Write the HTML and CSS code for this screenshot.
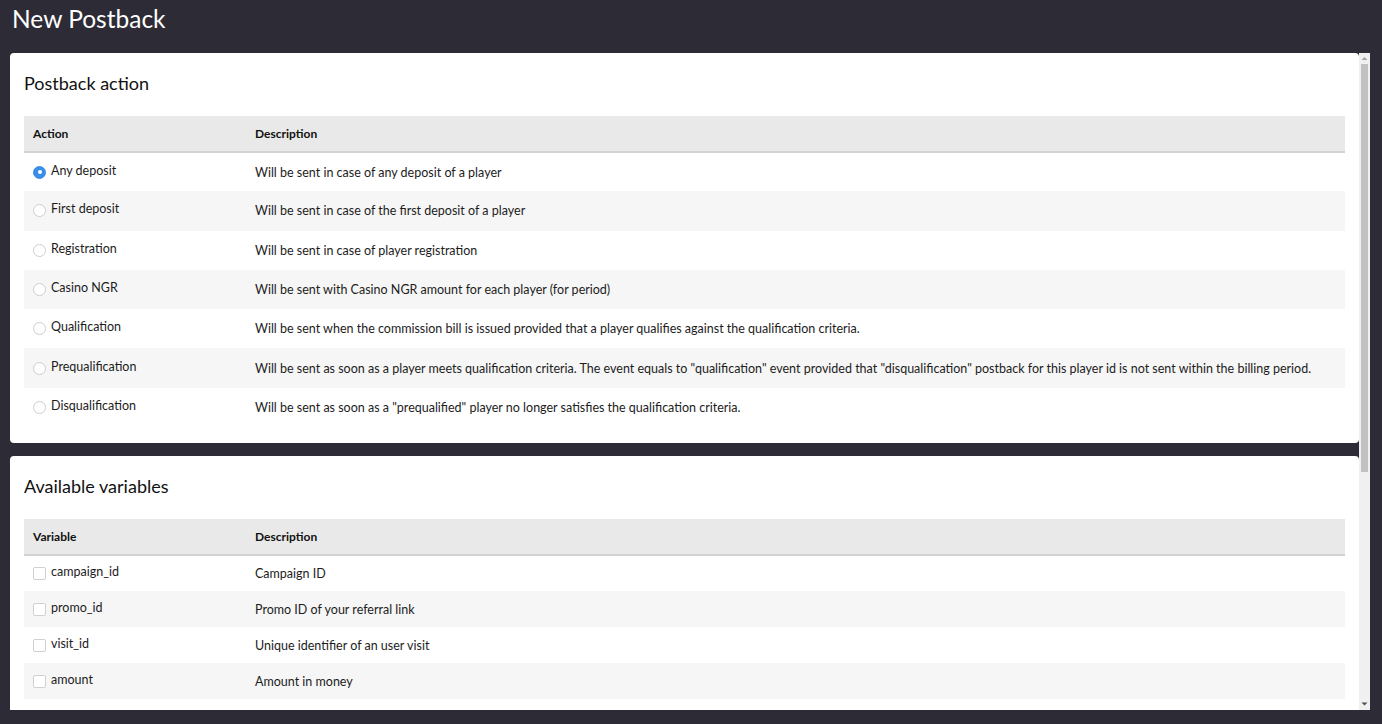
FILE: index.html
```html
<!DOCTYPE html>
<html>
<head>
<meta charset="utf-8">
<link rel="stylesheet" href="styles.css">
</head>
<body>
<header class="page-head"><h1 class="page-title">New Postback</h1></header>
<div class="viewport">
  <main class="content">
    <section class="card">
      <h2 class="card-title">Postback action</h2>
      <table class="grid actions">
        <colgroup><col class="col-a"><col></colgroup>
        <thead><tr><th>Action</th><th>Description</th></tr></thead>
        <tbody>
          <tr><td><label class="opt"><span class="radio on"></span>Any deposit</label></td><td>Will be sent in case of any deposit of a player</td></tr>
          <tr><td><label class="opt"><span class="radio"></span>First deposit</label></td><td>Will be sent in case of the first deposit of a player</td></tr>
          <tr><td><label class="opt"><span class="radio"></span>Registration</label></td><td>Will be sent in case of player registration</td></tr>
          <tr><td><label class="opt"><span class="radio"></span>Casino NGR</label></td><td>Will be sent with Casino NGR amount for each player (for period)</td></tr>
          <tr><td><label class="opt"><span class="radio"></span>Qualification</label></td><td>Will be sent when the commission bill is issued provided that a player qualifies against the qualification criteria.</td></tr>
          <tr><td><label class="opt"><span class="radio"></span>Prequalification</label></td><td>Will be sent as soon as a player meets qualification criteria. The event equals to "qualification" event provided that "disqualification" postback for this player id is not sent within the billing period.</td></tr>
          <tr><td><label class="opt"><span class="radio"></span>Disqualification</label></td><td>Will be sent as soon as a "prequalified" player no longer satisfies the qualification criteria.</td></tr>
        </tbody>
      </table>
    </section>
    <section class="card">
      <h2 class="card-title">Available variables</h2>
      <table class="grid vars">
        <colgroup><col class="col-a"><col></colgroup>
        <thead><tr><th>Variable</th><th>Description</th></tr></thead>
        <tbody>
          <tr><td><label class="opt"><span class="check"></span>campaign_id</label></td><td>Campaign ID</td></tr>
          <tr><td><label class="opt"><span class="check"></span>promo_id</label></td><td>Promo ID of your referral link</td></tr>
          <tr><td><label class="opt"><span class="check"></span>visit_id</label></td><td>Unique identifier of an user visit</td></tr>
          <tr><td><label class="opt"><span class="check"></span>amount</label></td><td>Amount in money</td></tr>
          <tr><td><label class="opt"><span class="check"></span>player_id</label></td><td>Player ID</td></tr>
          <tr><td><label class="opt"><span class="check"></span>currency</label></td><td>Currency of the amount</td></tr>
        </tbody>
      </table>
    </section>
  </main>
  <div class="scrollbar" aria-hidden="true">
    <div class="sb-btn">
      <svg width="11" height="11" viewBox="0 0 11 11"><path d="M2.5 7 L5.5 4 L8.5 7 Z" fill="#a3a3a3"/></svg>
    </div>
    <div class="sb-track"><div class="sb-thumb"></div></div>
    <div class="sb-btn">
      <svg width="11" height="11" viewBox="0 0 11 11"><path d="M2.5 3.5 L5.5 6.5 L8.5 3.5 Z" fill="#4f4f4f"/></svg>
    </div>
  </div>
</div>
</body>
</html>
```
FILE: styles.css
```css
html, body {
  margin: 0;
  padding: 0;
  background: #2d2b35;
  height: 724px;
  overflow: hidden;
  font-family: Lato, "Open Sans", sans-serif;
  color: #1c1c1c;
}
.page-head {
  height: 53px;
  box-sizing: border-box;
  padding: 3px 0 0 12px;
}
.page-title {
  margin: 0;
  font-size: 24.5px;
  font-weight: 400;
  color: #ffffff;
  line-height: 32px;
}
.viewport {
  margin-left: 10px;
  width: 1360px;
  height: 657px;
  display: flex;
}
.content {
  flex: 1;
  min-width: 0;
  overflow: hidden;
  display: flex;
  flex-direction: column;
  gap: 13px;
}
.scrollbar {
  flex: none;
  width: 11px;
  background: #f0f0f0;
  display: flex;
  flex-direction: column;
}
.sb-btn {
  height: 11px;
  flex: none;
}
.sb-btn svg {
  display: block;
}
.sb-track {
  flex: 1;
  padding: 0 2px;
}
.sb-thumb {
  height: 408px;
  background: #c1c1c1;
}
.card {
  flex: none;
  background: #ffffff;
  border-radius: 4px;
  padding: 14px 14px 16px 14px;
}
.card-title {
  margin: 0 0 17px 0;
  font-size: 18px;
  font-weight: 400;
  line-height: 32px;
  color: #111;
}
.grid {
  width: 100%;
  border-collapse: collapse;
  table-layout: fixed;
  font-size: 12.5px;
}
.grid .col-a {
  width: 222px;
}
.grid th {
  background: #e9e9e9;
  border-bottom: 2px solid #d3d3d3;
  text-align: left;
  font-weight: 700;
  height: 36px;
  padding: 0 9px;
  box-sizing: border-box;
  color: #111;
  font-size: 12px;
}
.grid td {
  padding: 0 9px;
  vertical-align: middle;
  white-space: nowrap;
}
.actions tbody tr {
  height: 39.3px;
}
.vars tbody tr {
  height: 36px;
}
.grid tbody tr:nth-child(even) td {
  background: #f6f6f6;
}
.opt {
  display: flex;
  align-items: center;
  gap: 5px;
  position: relative;
  top: -2px;
}
.radio {
  width: 13px;
  height: 13px;
  box-sizing: border-box;
  border-radius: 50%;
  border: 1px solid #cdcdcd;
  background: #fff;
  flex: none;
  position: relative;
  top: 2px;
}
.radio.on {
  background: #3b8ee8;
  border-color: #3b8ee8;
}
.radio.on::after {
  content: "";
  position: absolute;
  left: 3.5px;
  top: 3.5px;
  width: 4px;
  height: 4px;
  border-radius: 50%;
  background: #fff;
}
.check {
  width: 13px;
  height: 13px;
  box-sizing: border-box;
  border: 1px solid #d0d0d0;
  border-radius: 2px;
  background: #fff;
  flex: none;
  position: relative;
  top: 2px;
}
```
